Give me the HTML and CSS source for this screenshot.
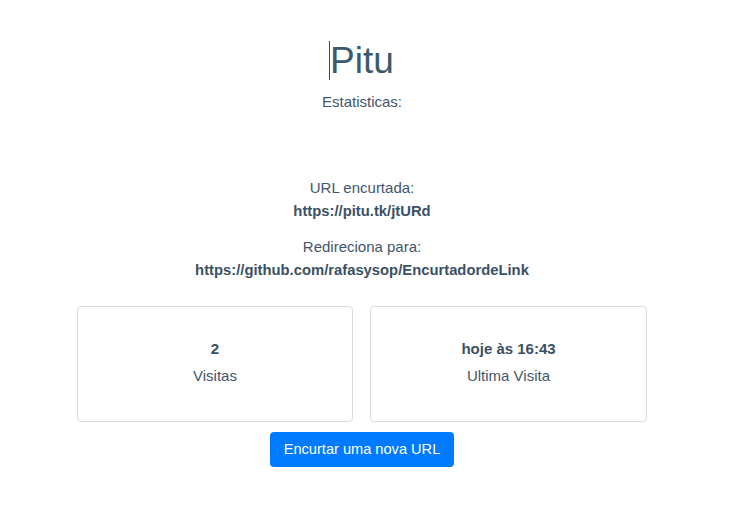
FILE: index.html
```html
<!DOCTYPE html>
<html lang="pt-BR">
<head>
<meta charset="utf-8">
<title>Pitu</title>
<link rel="stylesheet" href="styles.css">
</head>
<body>
<main class="page">
  <header class="head">
    <h1 class="title"><span class="caret"></span>Pitu</h1>
    <p class="subtitle">Estatisticas:</p>
  </header>
  <section class="info">
    <div class="pair">
      <p class="label">URL encurtada:</p>
      <p class="value">https://pitu.tk/jtURd</p>
    </div>
    <div class="pair">
      <p class="label">Redireciona para:</p>
      <p class="value">https://github.com/rafasysop/EncurtadordeLink</p>
    </div>
  </section>
  <section class="cards">
    <div class="card">
      <p class="card-value">2</p>
      <p class="card-label">Visitas</p>
    </div>
    <div class="card">
      <p class="card-value">hoje às 16:43</p>
      <p class="card-label">Ultima Visita</p>
    </div>
  </section>
  <div class="actions">
    <a class="btn" href="#">Encurtar uma nova URL</a>
  </div>
</main>
</body>
</html>
```
FILE: styles.css
```css
* { box-sizing: border-box; }
html, body { margin: 0; padding: 0; background: #fff; }
body {
  font-family: "Liberation Sans", Arial, sans-serif;
  color: #3f576c;
  font-size: 15px;
}
p { margin: 0; }
.page {
  width: 570px;
  margin-left: 77px;
  padding-top: 36px;
  text-align: center;
}
.head { display: flex; flex-direction: column; align-items: center; }
.title {
  margin: 0;
  font-size: 37px;
  font-weight: 400;
  line-height: 50px;
  position: relative;
  color: #3d596e;
}
.caret {
  position: absolute;
  left: -1px;
  top: 5px;
  width: 1px;
  height: 39px;
  background: #3b4d5c;
}
.subtitle { margin-top: 5px; line-height: 22px; }
.info {
  margin-top: 64px;
  display: flex;
  flex-direction: column;
  gap: 14px;
}
.pair { display: flex; flex-direction: column; }
.label, .value { line-height: 22.5px; }
.value { font-weight: 700; font-size: 14.8px; color: #3a5165; }
.cards {
  margin-top: 24.5px;
  display: grid;
  grid-template-columns: 276px 277px;
  gap: 17px;
}
.card {
  height: 116px;
  border: 1px solid #d9dcdf;
  border-radius: 4px;
  display: flex;
  flex-direction: column;
  justify-content: center;
  align-items: center;
  gap: 5px;
  padding-bottom: 3px;
}
.card-value { font-weight: 700; line-height: 22px; color: #3a5165; }
.card-label { line-height: 22px; }
.actions { margin-top: 10px; display: flex; justify-content: center; }
.btn {
  display: inline-block;
  background: #007bff;
  color: #fff;
  text-decoration: none;
  font-size: 14.6px;
  line-height: 21px;
  padding: 7px 13.5px;
  border-radius: 4px;
}
```
